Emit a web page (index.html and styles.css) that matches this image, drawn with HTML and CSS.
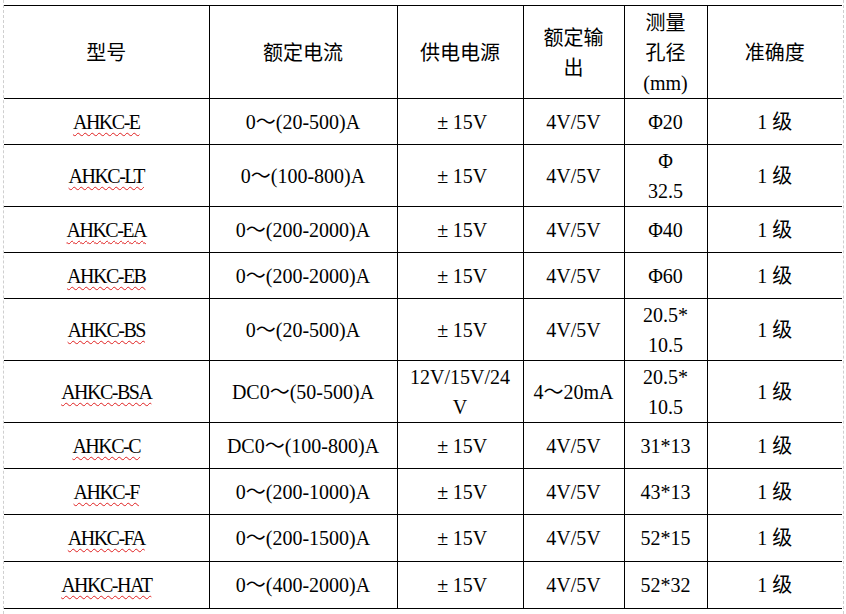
FILE: index.html
```html
<!DOCTYPE html>
<html lang="zh-CN">
<head>
<meta charset="utf-8">
<title>AHKC 型号表</title>
<link rel="stylesheet" href="styles.css">
</head>
<body>
<div class="page">
  <table class="spec">
    <colgroup>
      <col class="c1"><col class="c2"><col class="c3"><col class="c4"><col class="c5"><col class="c6">
    </colgroup>
    <tr class="hd">
      <td>型号</td>
      <td>额定电流</td>
      <td>供电电源</td>
      <td>额定输<br>出</td>
      <td>测量<br>孔径<br><span class="lat">(mm)</span></td>
      <td>准确度</td>
    </tr>
    <tr class="r46">
      <td><span class="sq">AHKC-E</span></td>
      <td>0～(20-500)A</td>
      <td><span class="pm">±</span>15V</td>
      <td>4V/5V</td>
      <td>Φ20</td>
      <td>1 级</td>
    </tr>
    <tr class="r62">
      <td><span class="sq">AHKC-LT</span></td>
      <td>0～(100-800)A</td>
      <td><span class="pm">±</span>15V</td>
      <td>4V/5V</td>
      <td>Φ<br>32.5</td>
      <td>1 级</td>
    </tr>
    <tr class="r46">
      <td><span class="sq">AHKC-EA</span></td>
      <td>0～(200-2000)A</td>
      <td><span class="pm">±</span>15V</td>
      <td>4V/5V</td>
      <td>Φ40</td>
      <td>1 级</td>
    </tr>
    <tr class="r46">
      <td><span class="sq">AHKC-EB</span></td>
      <td>0～(200-2000)A</td>
      <td><span class="pm">±</span>15V</td>
      <td>4V/5V</td>
      <td>Φ60</td>
      <td>1 级</td>
    </tr>
    <tr class="r62">
      <td><span class="sq">AHKC-BS</span></td>
      <td>0～(20-500)A</td>
      <td><span class="pm">±</span>15V</td>
      <td>4V/5V</td>
      <td>20.5*<br>10.5</td>
      <td>1 级</td>
    </tr>
    <tr class="r62">
      <td><span class="sq">AHKC-BSA</span></td>
      <td>DC0～(50-500)A</td>
      <td>12V/15V/24<br>V</td>
      <td>4～20mA</td>
      <td>20.5*<br>10.5</td>
      <td>1 级</td>
    </tr>
    <tr class="r46">
      <td><span class="sq">AHKC-C</span></td>
      <td>DC0～(100-800)A</td>
      <td><span class="pm">±</span>15V</td>
      <td>4V/5V</td>
      <td>31*13</td>
      <td>1 级</td>
    </tr>
    <tr class="r46">
      <td><span class="sq">AHKC-F</span></td>
      <td>0～(200-1000)A</td>
      <td><span class="pm">±</span>15V</td>
      <td>4V/5V</td>
      <td>43*13</td>
      <td>1 级</td>
    </tr>
    <tr class="r47">
      <td><span class="sq">AHKC-FA</span></td>
      <td>0～(200-1500)A</td>
      <td><span class="pm">±</span>15V</td>
      <td>4V/5V</td>
      <td>52*15</td>
      <td>1 级</td>
    </tr>
    <tr class="r47">
      <td><span class="sq">AHKC-HAT</span></td>
      <td>0～(400-2000)A</td>
      <td><span class="pm">±</span>15V</td>
      <td>4V/5V</td>
      <td>52*32</td>
      <td>1 级</td>
    </tr>
  </table>
</div>
</body>
</html>
```

FILE: styles.css
```css
html, body {
  margin: 0;
  padding: 0;
  background: #ffffff;
}

.page {
  box-sizing: border-box;
  margin-left: 3px;
  width: 841px;
  height: 614px;
  padding-top: 5px;
  border-left: 1px dashed #cfcfcf;
  border-right: 1px dashed #cfcfcf;
  overflow: hidden;
}

.spec {
  border-collapse: collapse;
  table-layout: fixed;
  width: 838px;
  font-family: "Liberation Serif", "Noto Sans CJK SC", serif;
  font-size: 20px;
  line-height: 30px;
  color: #000000;
}

.c1 { width: 205px; }
.c2 { width: 188px; }
.c3 { width: 126px; }
.c4 { width: 101px; }
.c5 { width: 83px; }
.c6 { width: 135px; }

.spec td {
  border: 1px solid #000000;
  padding: 0 4px;
  text-align: center;
  vertical-align: middle;
  white-space: nowrap;
}

.spec td:first-child { border-left: none; }
.spec td:last-child { border-right: none; }

.spec .hd td {
  font-family: "Noto Sans CJK SC", "Liberation Serif", sans-serif;
  font-size: 20px;
}

.spec .hd .lat {
  font-family: "Liberation Serif", serif;
}

.hd { height: 93px; }
.r46 { height: 46px; }
.r47 { height: 47px; }
.r62 { height: 62px; }

.sq {
  letter-spacing: -1.5px;
  text-decoration-line: underline;
  text-decoration-style: wavy;
  text-decoration-color: #e02020;
  text-decoration-thickness: 1px;
  text-underline-offset: 3px;
}

.pm {
  display: inline-block;
  width: 20px;
  text-align: center;
}
```
